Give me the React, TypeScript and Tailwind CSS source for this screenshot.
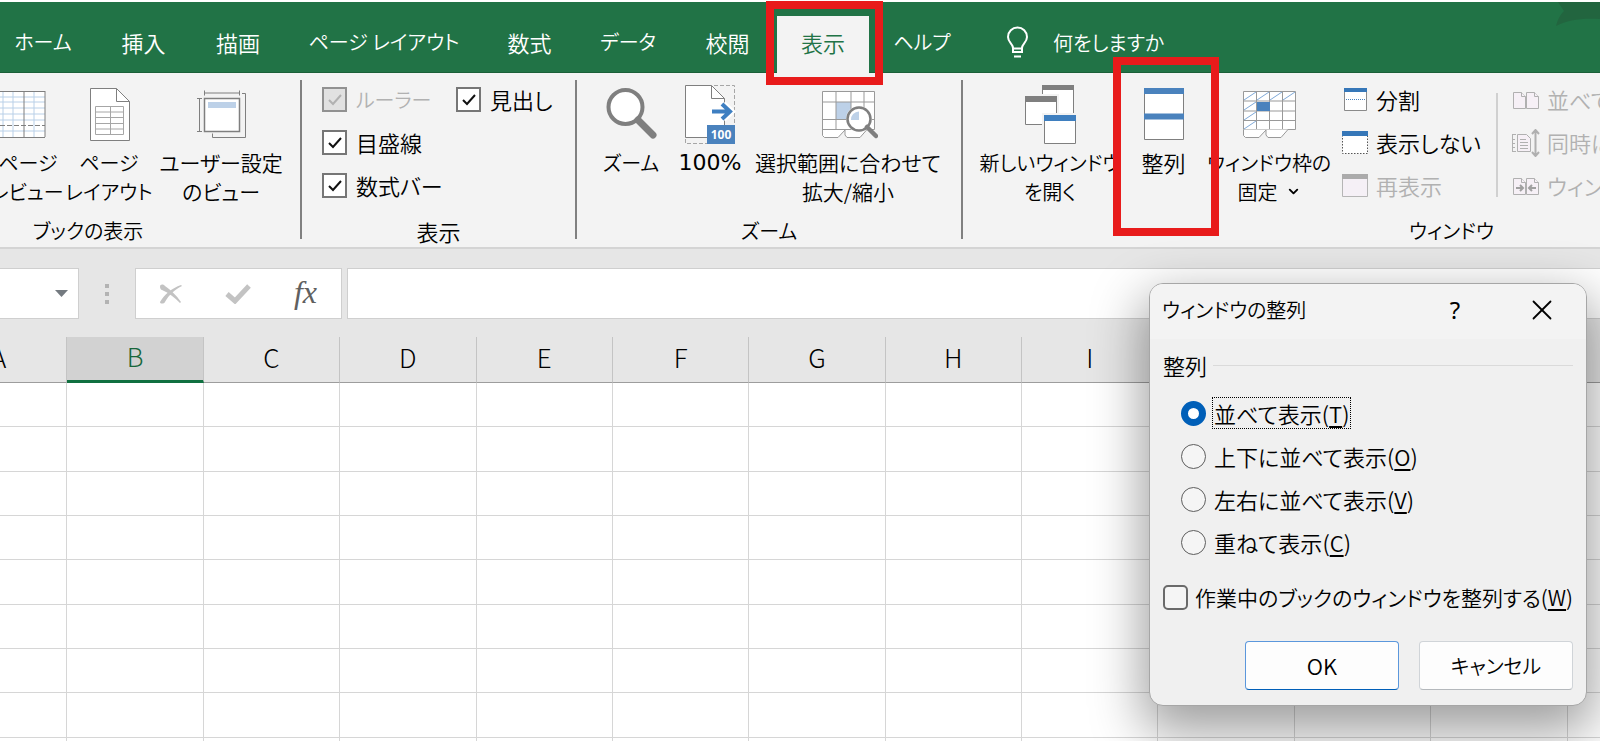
import { useState } from "react";
import type { ReactNode } from "react";
import { ChevronDown, X } from "lucide-react";
import clsx from "clsx";

// kana-only labels are set a little smaller than those with kanji
const TABS = [
  { label: "ホーム", style: "w-24 pr-[10px] text-[20px]" },
  { label: "挿入", style: "w-[95px]" },
  { label: "描画", style: "w-[94px]" },
  { label: "ページ レイアウト", style: "w-[198px] text-[20px]" },
  { label: "数式", style: "w-[93px]" },
  { label: "データ", style: "w-[104px] text-[20px]" },
  { label: "校閲", style: "w-[95px]" },
  { label: "表示", style: "ml-[2px] w-[92px]" },
  { label: "ヘルプ", style: "w-[106px] text-[20px]" },
];

const COLUMNS = ["A", "B", "C", "D", "E", "F", "G", "H", "I", "J", "K", "L", "M"];
const ROWS = [1, 2, 3, 4, 5, 6, 7, 8, 9];

const ARRANGE_OPTIONS = [
  { id: "tiled", label: "並べて表示", accessKey: "T" },
  { id: "horizontal", label: "上下に並べて表示", accessKey: "O" },
  { id: "vertical", label: "左右に並べて表示", accessKey: "V" },
  { id: "cascade", label: "重ねて表示", accessKey: "C" },
];

/* ---------- ribbon icons, all on a 60x60 grid ---------- */

function PageBreakIcon() {
  return (
    <svg viewBox="0 0 60 60" className="size-[60px]" fill="none">
      <path d="M5 6h52v46H5z" fill="#fff" />
      <path d="M5 12h52M5 17h52M5 23h52M5 29h52M5 35h52M5 46h52M15 6v46M25 6v46M46 6v46" stroke="#b9d0e8" />
      <path d="M36 6v46" stroke="#7f7f7f" />
      <path d="M5 40.500h52" stroke="#7f7f7f" strokeDasharray="5 2" />
      <path d="M5 6.500h52M57 6v46M5 52.500h52" stroke="#7f7f7f" />
    </svg>
  );
}

function PageLayoutIcon() {
  return (
    <svg viewBox="0 0 60 60" className="size-[60px]" fill="none" stroke="#7f7f7f">
      <path d="M11.500 3.500h26l13 13v39h-39z" fill="#fff" />
      <path d="M37.500 3.500v13h13" />
      <path d="M16.500 21.500h28v28h-28zM31.500 21v28M16 27h28M16 32.500h28M16 38.500h28M16 44h28" stroke="#a6a6a6" />
    </svg>
  );
}

function CustomViewIcon() {
  return (
    <svg viewBox="0 0 60 60" className="size-[60px]" fill="none" stroke="#7f7f7f">
      <path d="M13.500 13.500h35v33h-35z" fill="#fff" strokeWidth="1.500" />
      <path d="M17 17h28v6H17z" fill="#bdd1e8" stroke="none" />
      <path d="M13.500 5.500v5M48.500 5.500v5M13 8h35M6 13.500h5M6 46.500h5M8.500 13v33M51 8.500h3.500v44h-33v-4" />
    </svg>
  );
}

function ZoomIcon() {
  return (
    <svg viewBox="0 0 60 60" className="size-[60px]" fill="none" stroke="#7f7f7f">
      <circle cx="24.500" cy="22" r="17" fill="#fff" strokeWidth="4" />
      <path d="M37 35l15 15" strokeWidth="7" strokeLinecap="round" />
    </svg>
  );
}

function Zoom100Icon() {
  return (
    <svg viewBox="0 0 60 60" className="size-[60px]" fill="none">
      <path d="M5.500 .5h26l13 13v39h-39z" fill="#fff" stroke="#7f7f7f" />
      <path d="M31.500 .5v13h13" stroke="#7f7f7f" />
      <path d="M34 .5h20.500V40M5.500 54v4.500h22" stroke="#a6a6a6" strokeDasharray="4 2" />
      <path d="M32 26.500h18M43 19l8 7.500-8 7.500" stroke="#fff" strokeWidth="7" />
      <path d="M32 26.500h18M42 19l8 7.500-8 7.500" stroke="#3e7fc1" strokeWidth="4" />
      <path d="M27 40h28v19H27z" fill="#4a82bd" />
      <text x="41" y="54" textAnchor="middle" fill="#fff" fontSize="12" fontWeight="700" fontFamily="Noto Sans, sans-serif">100</text>
    </svg>
  );
}

function ZoomSelectionIcon() {
  return (
    <svg viewBox="0 0 60 60" className="size-[60px]" fill="none" stroke="#999">
      <path d="M4.500 6.500h52v38h-52z" fill="#fff" />
      <path d="M4.500 44.500v6l2 2H20l7-7.500v5l2 2.500h13l7-8" fill="#fff" />
      <path d="M18 17h15v17H18z" fill="#bdd1e8" stroke="none" />
      <path d="M18 6v38M33 6v38M46 6v38M4 17h52M4 34.500h52M4 44.500h30" />
      <circle cx="41" cy="34" r="13" fill="#f3f3f3" stroke="none" />
      <circle cx="41" cy="34" r="11.500" fill="#fff" stroke="#7f7f7f" strokeWidth="2.500" />
      <path d="M33 35a8 8 0 018-8.500V35z" fill="#bdd1e8" stroke="none" />
      <path d="M49 42l9 9" stroke="#7f7f7f" strokeWidth="4.500" strokeLinecap="round" />
    </svg>
  );
}

function NewWindowIcon() {
  return (
    <svg viewBox="0 0 60 60" className="size-[60px]" fill="#fff" stroke="#7f7f7f">
      <path d="M22.500 .5h31v28h-31z" />
      <path d="M22 0h32v5H22z" fill="#7f7f7f" stroke="none" />
      <path d="M4 10h34v31H4z" stroke="#f3f3f3" strokeWidth="2" />
      <path d="M5.500 11.500h31v28h-31z" />
      <path d="M5 11h32v6H5z" fill="#7f7f7f" stroke="none" />
      <path d="M23 29h34v31H23z" stroke="#f3f3f3" strokeWidth="2" />
      <path d="M24.500 30.500h31v28h-31z" />
      <path d="M24 30h32v6H24z" fill="#3f7fbf" stroke="none" />
    </svg>
  );
}

function ArrangeIcon() {
  return (
    <svg viewBox="0 0 60 60" className="size-[60px]" fill="#fff" stroke="#7f7f7f">
      <path d="M10.500 3.500h39v51h-39z" />
      <path d="M10 3h40v6H10zM10 28.500h40v6H10z" fill="#4a82bd" stroke="none" />
    </svg>
  );
}

function FreezePanesIcon() {
  return (
    <svg viewBox="0 0 60 60" className="size-[60px]" fill="none" stroke="#999">
      <path d="M4.500 6.500h52v38h-52z" fill="#fff" />
      <path d="M4.500 44.500v6l2 2H20l7-7.500v5l2 2.500h13l7-8" fill="#fff" />
      <path d="M5 15L17 7M18 15l12-8M31 15l12-8M44 15l12-8M5 25l12-8M5 35l12-8M5 44l12-8" stroke="#7fa9d8" />
      <path d="M17.500 6v38M30.500 6v38M43.500 6v38M4 16h52M4 26h52M4 35.500h52" />
      <path d="M18 17h13v9H18z" fill="#4a82bd" stroke="none" />
    </svg>
  );
}

/* ---------- small window icons ---------- */

function SplitIcon() {
  return (
    <svg viewBox="0 0 28 28" className="size-7" fill="none">
      <path d="M3.500 3.500h22v21h-22z" fill="#fff" stroke="#8a8a8a" />
      <path d="M3 2h23v4H3z" fill="#3677b8" />
      <path d="M5 13.500h19" stroke="#4a82bd" strokeDasharray="1 1" />
    </svg>
  );
}

function HideIcon() {
  return (
    <svg viewBox="0 0 28 28" className="size-7" fill="none">
      <path d="M1.500 4.500h25v20h-25z" fill="#fff" stroke="#555" strokeDasharray="1.500 1.500" />
      <path d="M1 2h26v5H1z" fill="#3677b8" />
    </svg>
  );
}

function UnhideIcon() {
  return (
    <svg viewBox="0 0 28 28" className="size-7" fill="none">
      <path d="M1.500 3.500h25v21h-25z" fill="#f5f0f6" stroke="#b5b5b5" />
      <path d="M1 2h26v5H1z" fill="#ababab" />
    </svg>
  );
}

function SideBySideIcon() {
  return (
    <svg viewBox="0 0 28 28" className="size-7" fill="#f6f0f6" stroke="#b0b0b0">
      <path d="M1.500 6.500h8l4 4v12h-12zM14.500 6.500h8l4 4v12h-12z" />
      <path d="M9.500 6.500v4h4M22.500 6.500v4h4" />
    </svg>
  );
}

function SyncScrollIcon() {
  return (
    <svg viewBox="0 0 28 28" className="size-7" fill="none" stroke="#b0b0b0">
      <path d="M5.500 5.500h9l4 4v13h-13z" fill="#f6f0f6" />
      <path d="M8 10.500h6M8 13.500h8M8 16.500h8M8 19.500h8M.5 5.500v17M0 5.500h4M1 10.500h2M1 14.500h2M1 18.500h2M0 22.500h4" />
      <path d="M23.500 1v26M20 5l3.500-4L27 5M20 23l3.500 4 3.500-4" strokeWidth="2" />
    </svg>
  );
}

function ResetPositionIcon() {
  return (
    <svg viewBox="0 0 28 28" className="size-7" fill="#f6f0f6" stroke="#b0b0b0">
      <path d="M1.500 6.500h8l4 4v12h-12zM14.500 6.500h8l4 4v12h-12z" />
      <path d="M9.500 6.500v4h4M22.500 6.500v4h4" />
      <path d="M4 16h7M8 13l3 3-3 3M24 16h-7M20 13l-3 3 3 3" fill="none" strokeWidth="2" stroke="#a0a0a0" />
    </svg>
  );
}

function BulbIcon() {
  return (
    <svg viewBox="0 0 24 34" className="h-[34px] w-6" fill="none" stroke="#fff" strokeWidth="2">
      <path d="M8 26v-4c0-4-5-5.500-5-11a9.500 9.500 0 0119 0c0 5.500-5 7-5 11v4z" />
      <path d="M8 22.500h9M9 30.500h7" />
    </svg>
  );
}

/* ---------- building blocks ---------- */

function HighlightBox({ className }: { className: string }) {
  return <span aria-hidden className={clsx("pointer-events-none absolute z-10 border-8 border-[#e81b1b]", className)} />;
}

function RibbonGroup({ label, className, labelStyle, children }: { label: string; className?: string; labelStyle?: string; children: ReactNode }) {
  return (
    <section className={clsx("flex shrink-0 flex-col justify-between pb-px", className)}>
      <div className="flex">{children}</div>
      <h2 className={clsx("text-center leading-[30px]", labelStyle)}>{label}</h2>
    </section>
  );
}

function Divider() {
  return <div className="mt-[7px] mb-2 w-[2px] shrink-0 bg-[#808080]" />;
}

function BigButton({ icon, lines, className, menu, children }: { icon: ReactNode; lines: string[]; className: string; menu?: boolean; children?: ReactNode }) {
  return (
    <button type="button" className={clsx("relative flex shrink-0 flex-col items-center whitespace-nowrap leading-[29px]", className)}>
      <span className="flex h-[75px] items-end pb-[3px]">{icon}</span>
      <span>{lines[0]}</span>
      {lines[1] && (
        <span className="flex items-center gap-2">
          {lines[1]}
          {menu && <ChevronDown size={15} strokeWidth={3} />}
        </span>
      )}
      {children}
    </button>
  );
}

function SmallButton({ icon, label, disabled }: { icon: ReactNode; label: string; disabled?: boolean }) {
  return (
    <button type="button" disabled={disabled} className={clsx("flex h-[43px] items-center gap-[7px] whitespace-nowrap", disabled && "text-[#b1b1b1]")}>
      {icon}
      {label}
    </button>
  );
}

function RibbonCheck({ label, disabled }: { label: string; disabled?: boolean }) {
  const [checked, setChecked] = useState(true);

  return (
    <label className={clsx("flex h-[43px] items-center gap-[9px] whitespace-nowrap", disabled && "text-[20px] text-[#b1b1b1]")}>
      <span className="grid size-[25px] place-items-center *:col-start-1 *:row-start-1">
        <input
          type="checkbox"
          checked={checked}
          disabled={disabled}
          onChange={(e) => setChecked(e.target.checked)}
          className="size-[25px] appearance-none border-2 border-[#767676] bg-white disabled:border-[#919191] disabled:bg-[#e1e1e1]"
        />
        {checked && (
          <svg viewBox="0 0 14 12" className="pointer-events-none h-3 w-[14px]" fill="none" stroke={disabled ? "#b1b1b1" : "#111"} strokeWidth="2">
            <path d="M1 6l4 4 8-9" />
          </svg>
        )}
      </span>
      {label}
    </label>
  );
}

function Ribbon() {
  return (
    <div className="flex h-[176px] border-b-2 border-[#d4d4d4] bg-[#f3f3f3]">
      <RibbonGroup label="ブックの表示" labelStyle="text-[20px]" className="-ml-[124px] w-[424px]">
        <div className="flex w-full justify-end pr-4">
          <BigButton icon={<PageBreakIcon />} lines={["改ページ", "プレビュー"]} className="w-[84px] text-[20px]" />
          <BigButton icon={<PageLayoutIcon />} lines={["ページ", "レイアウト"]} className="w-[98px] text-[20px]" />
          <BigButton icon={<CustomViewIcon />} lines={["ユーザー設定", "のビュー"]} className="w-[126px] text-[21px]" />
        </div>
      </RibbonGroup>
      <Divider />
      <RibbonGroup label="表示" className="w-[273px]">
        <div className="grid grid-cols-[134px_1fr] pt-[5px] pl-5">
          <RibbonCheck label="ルーラー" disabled />
          <RibbonCheck label="見出し" />
          <RibbonCheck label="目盛線" />
          <span />
          <RibbonCheck label="数式バー" />
        </div>
      </RibbonGroup>
      <Divider />
      <RibbonGroup label="ズーム" labelStyle="text-[20px]" className="w-96">
        <div className="flex pl-[14px]">
          <BigButton icon={<ZoomIcon />} lines={["ズーム"]} className="w-20 text-[20px]" />
          <BigButton icon={<Zoom100Icon />} lines={["100%"]} className="w-[78px] font-['DejaVu_Sans',sans-serif] font-normal" />
          <BigButton icon={<ZoomSelectionIcon />} lines={["選択範囲に合わせて", "拡大/縮小"]} className="w-[198px] text-[21px]" />
        </div>
      </RibbonGroup>
      <Divider />
      <RibbonGroup label="ウィンドウ" labelStyle="text-[20px]" className="w-[977px]">
        <div className="flex pl-3">
          <BigButton icon={<NewWindowIcon />} lines={["新しいウィンドウ", "を開く"]} className="w-[150px] text-[20px]" />
          <BigButton icon={<ArrangeIcon />} lines={["整列"]} className="w-[77px]">
            <HighlightBox className="-top-4 -left-3 h-[179px] w-[106px]" />
          </BigButton>
          <BigButton icon={<FreezePanesIcon />} lines={["ウィンドウ枠の", "固定"]} className="w-[134px] text-[20px]" menu />
        </div>
        <div className="flex w-40 flex-col items-start pt-[5px] pl-[5px]">
          <SmallButton icon={<SplitIcon />} label="分割" />
          <SmallButton icon={<HideIcon />} label="表示しない" />
          <SmallButton icon={<UnhideIcon />} label="再表示" disabled />
        </div>
        <div className="mt-5 h-[104px] w-[2px] shrink-0 bg-[#d0d0d0]" />
        <div className="flex flex-col items-start pt-[5px] pl-[14px]">
          <SmallButton icon={<SideBySideIcon />} label="並べて比較" disabled />
          <SmallButton icon={<SyncScrollIcon />} label="同時にスクロール" disabled />
          <SmallButton icon={<ResetPositionIcon />} label="ウィンドウの位置を元に戻す" disabled />
        </div>
      </RibbonGroup>
    </div>
  );
}

function TabBar() {
  return (
    <header className="relative mt-[2px] flex h-[71px] border-b border-[#1a5f38] bg-[#217346] text-white">
      <nav className="flex pt-[14px]">
        {TABS.map((tab) => (
          <button
            key={tab.label}
            type="button"
            className={clsx(
              "relative -mb-px shrink-0 whitespace-nowrap pb-[5px]",
              tab.style,
              tab.label === "表示" && "bg-[#f3f3f3] text-[#217346]"
            )}
          >
            {tab.label}
            {tab.label === "表示" && <HighlightBox className="-top-[15px] -left-[11px] h-[84px] w-[117px]" />}
          </button>
        ))}
      </nav>
      <label className="ml-[30px] flex items-center gap-6 pt-3">
        <BulbIcon />
        <input aria-label="操作アシスト" placeholder="何をしますか" className="w-40 bg-transparent text-[20px] outline-none placeholder:text-white" />
      </label>
      <svg viewBox="0 0 44 24" className="absolute top-0 right-0 h-6 w-11" fill="#22653f">
        <path d="M2 0h42v17C24 16 12 18 0 24c2-7 4-11 8-15z" />
      </svg>
    </header>
  );
}

function FormulaBar() {
  return (
    <div className="flex h-[88px] items-start bg-[#e6e6e6] pt-[19px]">
      <button type="button" aria-label="名前ボックス" className="flex h-[51px] w-[79px] items-center justify-end border border-l-0 border-[#cfcfcf] bg-white pr-[10px]">
        <svg viewBox="0 0 13 7" className="h-[7px] w-[13px]" fill="#747a80">
          <path d="M0 0h13L6.500 7z" />
        </svg>
      </button>
      <div className="flex h-[51px] w-14 flex-col items-center justify-center gap-1">
        <span className="size-1 bg-[#b3b3b3]" />
        <span className="size-1 bg-[#b3b3b3]" />
        <span className="size-1 bg-[#b3b3b3]" />
      </div>
      <div className="flex h-[51px] w-[207px] items-center justify-between border border-[#cfcfcf] bg-white pr-6 pl-6">
        <button type="button" aria-label="キャンセル">
          <svg viewBox="0 0 22 20" className="h-5 w-[22px]" fill="#c3c3c3">
            <path d="M0 3C0 0 3 0 5 2c6 4 11 9 16 16l-1 1C15 14 9 9 2 6 1 6 0 4 0 3z" />
            <path d="M22 2C14 6 9 11 5 18c-1 2-5 2-5 0C4 11 12 4 21 1z" />
          </svg>
        </button>
        <button type="button" aria-label="入力">
          <svg viewBox="0 0 26 20" className="h-5 w-[26px]" fill="none" stroke="#c3c3c3" strokeWidth="5">
            <path d="M2 10l8 7L24 2" />
          </svg>
        </button>
        <button type="button" aria-label="関数の挿入" className="pb-1 font-['Liberation_Serif',serif] text-[32px] leading-8 text-[#606060] italic">
          fx
        </button>
      </div>
      <input aria-label="数式バー" className="ml-[5px] h-[51px] min-w-0 flex-1 border border-r-0 border-[#cfcfcf] bg-white px-3 outline-none" />
    </div>
  );
}

function Sheet() {
  return (
    <div className="overflow-hidden bg-white">
      <table className="-ml-[69px] h-[445px] w-[1773px] table-fixed border-separate border-spacing-0">
        <thead>
          <tr className="h-[46px] bg-[#e6e6e6]">
            {COLUMNS.map((col) => (
              <th
                key={col}
                scope="col"
                className={clsx(
                  "border-r border-r-[#c4c4c4] p-0 pb-[6px] text-[26px] leading-9 font-light",
                  col === "B" ? "border-b-3 border-b-[#107040] bg-[#d2d2d2] text-[#17663a]" : "border-b border-b-[#9d9d9d]"
                )}
              >
                {col}
              </th>
            ))}
          </tr>
        </thead>
        <tbody>
          {ROWS.map((row) => (
            <tr key={row}>
              {COLUMNS.map((col) => (
                <td key={col} className="border-r border-b border-[#d6d6d6] p-0" />
              ))}
            </tr>
          ))}
        </tbody>
      </table>
    </div>
  );
}

function ArrangeDialog() {
  const [mode, setMode] = useState("tiled");
  const [onlyActive, setOnlyActive] = useState(false);

  return (
    <div
      role="dialog"
      aria-labelledby="arrange-title"
      className="absolute top-[283px] right-[13px] z-20 w-[438px] overflow-hidden rounded-[14px] border border-[#a6a6a6] bg-[#f0f0f0] shadow-[0_20px_52px_6px_rgba(0,0,0,0.38)]"
    >
      <div className="flex h-[55px] items-center bg-[#f3f3f3] pb-[3px] pl-3">
        <h2 id="arrange-title" className="flex-1 text-[20px]">ウィンドウの整列</h2>
        <button type="button" aria-label="ヘルプ" className="w-[86px] font-['Noto_Sans',sans-serif] text-[24px] font-normal">?</button>
        <button type="button" aria-label="閉じる" className="flex w-[88px] justify-center">
          <X size={34} strokeWidth={1.25} />
        </button>
      </div>
      <form className="px-[13px] pt-[9px] pb-[15px]" onSubmit={(e) => e.preventDefault()}>
        <div role="radiogroup" aria-labelledby="arrange-legend">
          <div className="flex items-center gap-[6px] leading-[34px]">
            <span id="arrange-legend">整列</span>
            <span className="h-px flex-1 bg-[#dadada]" />
          </div>
          <div className="flex flex-col gap-[11px] pt-[15px] pl-[18px]">
            {ARRANGE_OPTIONS.map((opt) => (
              <label key={opt.id} className="flex items-center gap-[6px] self-start leading-[30px]">
                <input
                  type="radio"
                  name="arrange"
                  checked={mode === opt.id}
                  onChange={() => setMode(opt.id)}
                  className="size-[25px] appearance-none rounded-full border border-[#5d5d5d] bg-[#f5f5f5] checked:border-[7px] checked:border-[#005fb8] checked:bg-white"
                />
                <span className={clsx("border px-px", mode === opt.id ? "border-dotted border-black" : "border-transparent")}>
                  {opt.label}(<u className="underline-offset-3">{opt.accessKey}</u>)
                </span>
              </label>
            ))}
          </div>
        </div>
        <label className="flex items-center gap-[7px] whitespace-nowrap pt-[23px] leading-[32px]">
          <input
            type="checkbox"
            checked={onlyActive}
            onChange={(e) => setOnlyActive(e.target.checked)}
            className="size-[25px] shrink-0 appearance-none rounded-[5px] border-2 border-[#6a6a6a] bg-[#f5f5f5] checked:bg-[#005fb8]"
          />
          <span className="text-[21px]">
            作業中のブックのウィンドウを整列する(<u className="underline-offset-3">W</u>)
          </span>
        </label>
        <div className="flex justify-end gap-5 pt-7">
          <button type="submit" className="h-[49px] w-[154px] rounded-[4px] border border-[#5b97dc] border-b-[#005fb8] bg-[#fdfdfd]">
            OK
          </button>
          <button type="button" className="h-[49px] w-[154px] rounded-[4px] border border-[#d0d4d8] border-b-[#b4b8bc] bg-[#fdfdfd] text-[20px]">
            キャンセル
          </button>
        </div>
      </form>
    </div>
  );
}

export default function App() {
  return (
    <div className="relative h-screen overflow-hidden bg-white font-['Noto_Sans_CJK_JP',sans-serif] text-[22px] font-[350] text-black [font-feature-settings:'palt']">
      <TabBar />
      <Ribbon />
      <FormulaBar />
      <Sheet />
      <ArrangeDialog />
    </div>
  );
}
